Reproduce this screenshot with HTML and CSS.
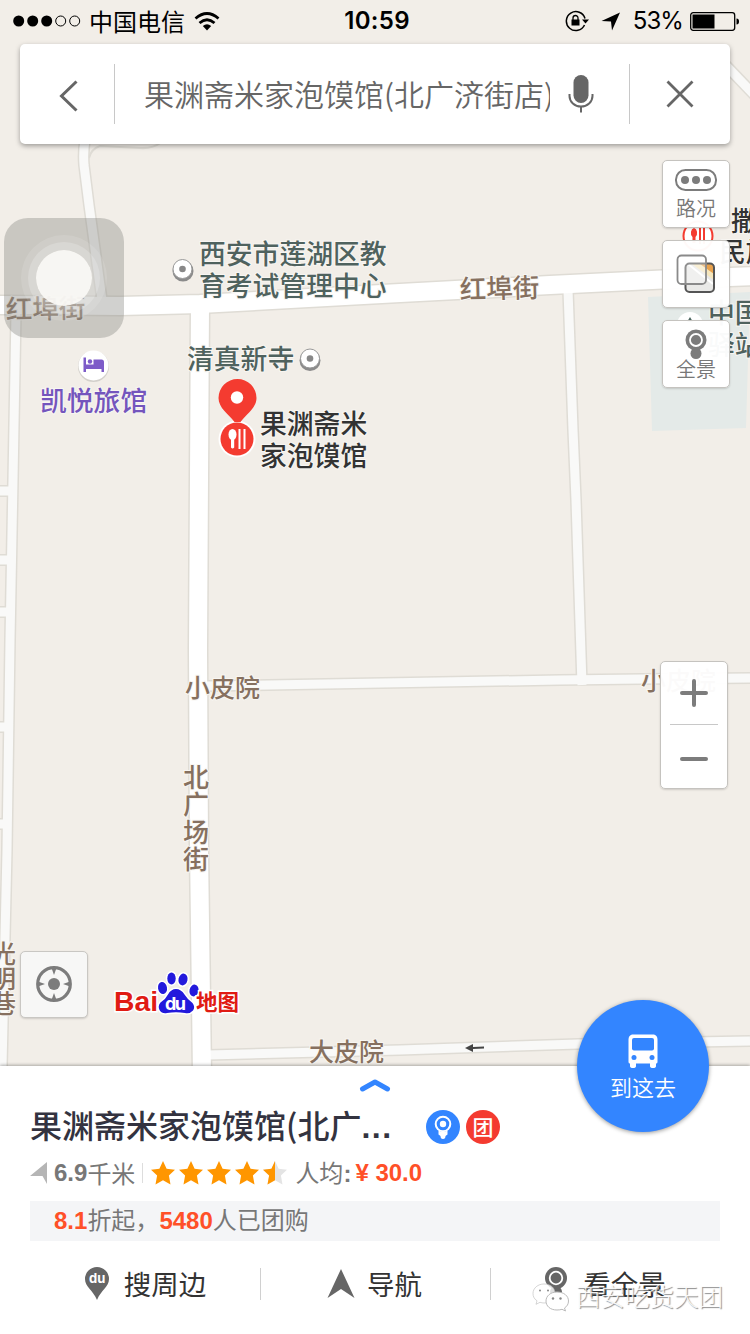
FILE: index.html
```html
<!DOCTYPE html>
<html lang="zh-CN">

<head>
    <meta charset="UTF-8">
    <meta name="viewport" content="width=device-width, initial-scale=1.0">
    <title>果渊斋米家泡馍馆</title>
    <link rel="stylesheet" href="styles.css">
</head>

<body>

    <div class="map-area">

        <!-- map canvas -->
        <svg class="map" width="750" height="1066" viewBox="0 0 750 1066">
            <defs>
                <g id="roads-small">
                    <path d="M85 140 Q83 152 84 165 L89 205 L102 300" />
                    <path d="M568 290 L573 430 L576 500 L582 685" />
                    <path d="M206 686 L560 680 L642 679 L750 678" />
                    <path d="M208 1055 L400 1050 L578 1044 L750 1041" />
                    <path d="M16 312 L13 480 L10 640 L7 850 L2 1066" />
                    <path d="M715 54 L765 106" />
                    <path d="M-5 491 H12 M-5 560 H12 M-5 612 H10 M-5 727 H9 M-5 824 H8" />
                </g>
                <g id="roads-main">
                    <path d="M-5 305 L120 306 L200 304 L400 293 L550 285 L662 279.5 L760 276" />
                    <path d="M200 305 L198 650 L199 850 L202 1075" />
                </g>
            </defs>
            <path class="block" d="M648 297 L750 292 L746 428 L652 431 Z" />
            <path class="edge" d="M89 158 Q91 149 100 146 L140 148 Q152 149 162 142" />
            <use href="#roads-small" class="case small" />
            <use href="#roads-main" class="case main" />
            <use href="#roads-small" class="road small" />
            <use href="#roads-main" class="road main" />
            <path d="M465 1048 l8 -4 v3 l11 -.5 v2 l-11 .5 v3 Z" fill="#444" />

            <!-- street names -->
            <g class="street">
                <text x="6" y="319" transform="rotate(-1 7 319)">红埠街</text>
                <text x="460" y="299" transform="rotate(-1.5 461 300)">红埠街</text>
                <g font-size="25">
                    <text x="185" y="697">小皮院</text>
                    <text x="641" y="690">小皮院</text>
                    <text x="309" y="1061">大皮院</text>
                    <text x="-9" y="963">光</text>
                    <text x="-9" y="988">明</text>
                    <text x="-9" y="1013">巷</text>
                </g>
                <g font-size="26">
                    <text x="183" y="787">北</text>
                    <text x="183" y="814">广</text>
                    <text x="183" y="842">场</text>
                    <text x="183" y="869">街</text>
                </g>
            </g>

            <!-- places -->
            <g class="place">
                <text x="199" y="264">西安市莲湖区教</text>
                <text x="199" y="296">育考试管理中心</text>
                <text x="187" y="369">清真新寺</text>
                <text x="708" y="323">中国</text>
                <text x="708" y="355">驿站</text>
            </g>
            <text class="hotel" x="40" y="411">凯悦旅馆</text>
            <g class="food">
                <text x="260" y="434">果渊斋米</text>
                <text x="260" y="466">家泡馍馆</text>
                <text x="731" y="231">撒拉</text>
                <text x="719" y="262">民族</text>
            </g>

            <g>
                <circle cx="183" cy="271" r="10.500" fill="#8b8b8b" />
                <circle cx="182.500" cy="269" r="9.500" fill="#fff" stroke="#999" />
                <circle cx="182.500" cy="269" r="3.300" fill="#888" />
                <circle cx="310" cy="360.500" r="10.500" fill="#8b8b8b" />
                <circle cx="310" cy="358.500" r="9.500" fill="#fff" stroke="#999" />
                <circle cx="310" cy="358.500" r="3.300" fill="#888" />
            </g>

            <circle cx="93.500" cy="366.500" r="15.500" fill="#d3d0cb" />
            <circle cx="93.500" cy="365.500" r="15" fill="#fff" />
            <path d="M83.500 357.500 h2.500 v7 h7.500 v-5 h8 q2.500 0 2.500 2.500 v10 h-2.500 v-3 h-15.500 v3 h-2.500 Z" fill="#7d5bc8" />
            <circle cx="90" cy="361.500" r="2.200" fill="#7d5bc8" />

            <circle cx="237" cy="439" r="18.500" fill="#fff" />
            <circle cx="237" cy="439" r="16.500" fill="#f43b30" />
            <path d="M218.500 398 a19 19 0 0 1 38 0 c0 10 -10 16 -16 24 h-6 c-6 -8 -16 -14 -16 -24 Z" fill="#f43b30" />
            <circle cx="237" cy="397.500" r="6.200" fill="#fff" />
            <g fill="#fff">
                <ellipse cx="232.500" cy="434.500" rx="4" ry="5.500" />
                <path d="M231 438 h3.200 v9.500 q-1.600 2 -3.200 0 Z M238.500 429 h2 v20 h-2 Z M243.500 429 h2 v20 h-2 Z" />
            </g>

            <circle cx="698" cy="236" r="14.500" fill="#fff" stroke="#f43b30" stroke-width="2" />
            <path d="M694 228 a3.800 5 0 0 1 1.500 9 v6 h-3 v-6 a3.800 5 0 0 1 1.500 -9 Z M699 228 h2 v16 h-2 Z M703 228 h2 v16 h-2 Z" fill="#f43b30" />
            <circle cx="690" cy="325" r="13" fill="#fff" />
            <path d="M690 317 l3 5 h-6 Z" fill="#4d6660" />
        </svg>

        <div class="status-bar">
            <div class="status-left">
                <svg width="68" height="12" viewBox="0 0 68 12">
                    <circle cx="5.700" cy="6" r="5.500" />
                    <circle cx="19.700" cy="6" r="5.500" />
                    <circle cx="33.700" cy="6" r="5.500" />
                    <circle cx="47.700" cy="6" r="5" fill="none" stroke="#000" />
                    <circle cx="61.700" cy="6" r="5" fill="none" stroke="#000" />
                </svg>
                <span class="carrier">中国电信</span>
                <svg width="26" height="19" viewBox="0 0 26 19">
                    <path d="M1.500 6.500 Q13 -3.500 24.500 6.500 M5.500 11 Q13 4.500 20.500 11" fill="none" stroke="#000" stroke-width="2.800" />
                    <path d="M8.800 14 Q13 10.500 17.200 14 L13 18.500 Z" />
                </svg>
            </div>
            <span class="time">10:59</span>
            <div class="status-right">
                <svg width="24" height="22" viewBox="0 0 24 22">
                    <path d="M19.500 15 A9.500 9.500 0 1 1 20 8.500" fill="none" stroke="#000" stroke-width="1.500" />
                    <path d="M17 9.500 h7 l-3.500 4 Z" />
                    <rect x="6.500" y="9.500" width="8" height="6" />
                    <path d="M8 10 v-2 a2.500 2.500 0 0 1 5 0 v2" fill="none" stroke="#000" stroke-width="1.300" />
                </svg>
                <svg class="gps" width="20" height="19" viewBox="0 0 20 19">
                    <path d="M19 .5 L11 18.500 L10 9.500 L.5 9 Z" />
                </svg>
                <span class="percent">53%</span>
                <svg width="49" height="19" viewBox="0 0 49 19">
                    <rect x=".7" y=".7" width="44" height="17.600" rx="2.500" fill="none" stroke="#000" stroke-width="1.300" />
                    <rect x="2.500" y="2.500" width="22" height="14" />
                    <path d="M46.500 6.500 q2.500 0 2.500 3 t-2.500 3 Z" />
                </svg>
            </div>
        </div>

        <div class="search">
            <div class="search-back">
                <svg width="20" height="32" viewBox="0 0 20 32">
                    <path d="M17.500 1.500 L2.500 16 L17.500 30.500" fill="none" stroke="#666" stroke-width="3" />
                </svg>
            </div>
            <div class="search-text">果渊斋米家泡馍馆(北广济街店)</div>
            <svg class="mic" width="26" height="40" viewBox="0 0 26 40">
                <rect x="5.500" y="1" width="15" height="28" rx="7.500" fill="#666" />
                <path d="M1.500 20 v2 a11.500 10.500 0 0 0 23 0 v-2 M13 32 v6.500" fill="none" stroke="#666" stroke-width="2" />
            </svg>
            <div class="search-close">
                <svg width="28" height="28" viewBox="0 0 28 28">
                    <path d="M1.500 1.500 L26.500 26.500 M26.500 1.500 L1.500 26.500" fill="none" stroke="#666" stroke-width="2.800" />
                </svg>
            </div>
        </div>

        <div class="tools">
            <div class="tool">
                <svg width="42" height="22" viewBox="0 0 42 22">
                    <rect x="1" y="1" width="40" height="20" rx="9.500" fill="none" stroke="#7c7c7c" stroke-width="2" />
                    <g fill="#7c7c7c">
                        <circle cx="10" cy="11" r="4" />
                        <circle cx="21" cy="11" r="4" />
                        <circle cx="32" cy="11" r="4" />
                    </g>
                </svg>
                <span>路况</span>
            </div>
            <div class="tool">
                <svg class="layers" width="40" height="40" viewBox="0 0 40 40">
                    <rect x="10" y="10" width="27.500" height="27.500" rx="3" fill="#e9e9e7" />
                    <path d="M16 10 H35 q3 0 3 3 V26 Z" fill="#f6e7bd" />
                    <path d="M24 10 H35 q3 0 3 3 V20 Z" fill="#e9a24d" />
                    <path d="M12 10 L37 30" stroke="#fff" stroke-width="2" />
                    <rect x="9.500" y="9.500" width="28.500" height="28.500" rx="4" fill="none" stroke="#555" stroke-width="2" />
                    <rect x="1.500" y="1.500" width="28.500" height="28.500" rx="4" fill="#fff" fill-opacity=".35" stroke="#8a8a8a" stroke-width="1.800" />
                </svg>
            </div>
            <div class="tool">
                <svg width="22" height="31" viewBox="0 0 22 31">
                    <circle cx="11" cy="24.500" r="5.500" fill="#7c7c7c" />
                    <circle cx="11" cy="11" r="10.500" fill="#7c7c7c" />
                    <circle cx="11" cy="11" r="6" fill="#7c7c7c" stroke="#fff" stroke-width="1.800" />
                </svg>
                <span>全景</span>
            </div>
        </div>

        <div class="zoom">
            <div class="zoom-btn">
                <svg width="28" height="28" viewBox="0 0 28 28">
                    <path d="M2 14 H26 M14 2 V26" stroke="#7c7c7c" stroke-width="4" stroke-linecap="round" />
                </svg>
            </div>
            <div class="zoom-btn">
                <svg width="28" height="28" viewBox="0 0 28 28">
                    <path d="M2 14 H26" stroke="#7c7c7c" stroke-width="4" stroke-linecap="round" />
                </svg>
            </div>
        </div>

        <div class="map-bottom">
            <div class="locate">
                <svg width="36" height="36" viewBox="0 0 36 36">
                    <circle cx="18" cy="18" r="16.300" fill="none" stroke="#7c7c7c" stroke-width="3.200" />
                    <circle cx="18" cy="18" r="6" fill="#7c7c7c" />
                    <path d="M15.500 2 h5 l-2.500 7 Z M15.500 34 h5 l-2.500 -7 Z M2 15.500 v5 l7 -2.500 Z M34 15.500 v5 l-7 -2.500 Z" fill="#7c7c7c" />
                </svg>
            </div>
            <svg class="logo" width="130" height="46" viewBox="0 0 130 46">
                <text class="logo-bai" x="1" y="40" textLength="44" lengthAdjust="spacingAndGlyphs">Bai</text>
                <g fill="#2319dc" stroke="#fff" stroke-width="3" paint-order="stroke">
                    <path d="M63 18 q5 0 8.500 5.500 t8 8.500 q3 4 .5 7.500 q-3 3.500 -8 2.500 q-9 -1.500 -18 0 q-5 1 -7.500 -3 q-2 -4 1 -7.500 q5 -3 7.500 -8 q3 -5.500 8 -5.500 Z" />
                    <ellipse cx="49.500" cy="17" rx="4.500" ry="6" transform="rotate(-10 49.500 17)" />
                    <ellipse cx="58.500" cy="7.500" rx="4.200" ry="6" />
                    <ellipse cx="70" cy="8.500" rx="4.500" ry="6" transform="rotate(12 70 8.500)" />
                    <ellipse cx="81" cy="19.500" rx="4.500" ry="6" transform="rotate(12 81 19.500)" />
                </g>
                <text class="logo-du" x="52" y="38.500" textLength="21">du</text>
                <text class="logo-map" x="83" y="39">地图</text>
            </svg>
        </div>

        <div class="assistive">
            <div class="ring"></div>
        </div>
    </div>

    <div class="panel">
        <svg class="panel-arrow" width="32" height="16" viewBox="0 0 32 16">
            <path d="M3.500 12 L16 5 L28.500 12" fill="none" stroke="#3385ff" stroke-width="5" stroke-linecap="round" stroke-linejoin="round" />
        </svg>

        <div class="title-row">
            <h1>果渊斋米家泡馍馆(北广<span class="dots">...</span></h1>
            <svg width="34" height="34" viewBox="0 0 34 34">
                <circle cx="17" cy="17" r="17" fill="#3385ff" />
                <circle cx="17" cy="14" r="7.300" fill="none" stroke="#fff" stroke-width="2" />
                <circle cx="17" cy="14" r="3.200" fill="#fff" />
                <path d="M12.500 20.500 q4.500 2.500 9 0 v4 l-2 1.500 q0 3 -2.500 3 t-2.500 -3 l-2 -1.500 Z" fill="#fff" />
            </svg>
            <span class="tuan">团</span>
        </div>

        <div class="info-row">
            <svg width="18" height="22" viewBox="0 0 18 22">
                <path d="M0 14 L17 0 V22 L12.500 14 Z" fill="#b5b5b5" />
            </svg>
            <span class="distance"><b>6.9</b>千米</span>
            <svg class="stars" width="140" height="26" viewBox="0 0 140 26">
                <defs>
                    <path id="star" d="M12 0 L15.600 7.800 L24 8.800 L17.900 14.500 L19.500 23.500 L12 19.300 L4.500 23.500 L6.100 14.500 L0 8.800 L8.400 7.800 Z" />
                </defs>
                <g fill="#ff9600">
                    <use href="#star" x="1" y="1" />
                    <use href="#star" x="29" y="1" />
                    <use href="#star" x="57" y="1" />
                    <use href="#star" x="85" y="1" />
                </g>
                <use href="#star" x="113" y="1" fill="#e4e4e4" />
                <path d="M125 1 V20.300 L117.500 24.500 L119.100 15.500 L113 9.800 L121.400 8.800 Z" fill="#ff9600" />
            </svg>
            <span class="avg">人均<b>:</b></span>
            <b class="price">¥ 30.0</b>
        </div>

        <div class="deal"><b>8.1</b>折起，<b>5480</b>人已团购</div>

        <div class="tabs">
            <div class="tab">
                <svg width="24" height="35" viewBox="0 0 24 35">
                    <path d="M12 0 a12 12 0 0 1 12 12 c0 8 -8 11 -12 21 c-4 -10 -12 -13 -12 -21 a12 12 0 0 1 12 -12 Z" fill="#666" />
                    <text class="pin-du" x="4" y="16">du</text>
                </svg>
                <span>搜周边</span>
            </div>
            <div class="tab">
                <svg width="28" height="30" viewBox="0 0 28 30">
                    <path d="M14 0 L27.500 29 L14 20 L.5 29 Z" fill="#666" />
                </svg>
                <span>导航</span>
            </div>
            <div class="tab">
                <svg class="pano" width="24" height="33" viewBox="0 0 24 33">
                    <circle cx="12" cy="26" r="6" fill="#666" />
                    <circle cx="12" cy="12" r="11" fill="#666" />
                    <circle cx="12" cy="12" r="6.300" fill="#666" stroke="#fff" stroke-width="1.800" />
                </svg>
                <span>看全景</span>
            </div>
        </div>

        <div class="go">
            <svg width="30" height="34" viewBox="0 0 30 34">
                <path d="M4 .5 H26 q3.500 1 3.500 5 V28 q0 1.500 -1.500 1.500 V32 q0 2 -3 2 t-3 -2 V29.500 H8 V32 q0 2 -3 2 t-3 -2 V29.500 Q.5 29.500 .5 28 V5.500 Q.5 1.500 4 .5 Z" fill="#fff" />
                <rect x="4" y="4" width="22" height="12.500" rx="2" fill="#3385ff" />
                <circle cx="6" cy="23.500" r="2.500" fill="#3385ff" />
                <circle cx="24" cy="23.500" r="2.500" fill="#3385ff" />
            </svg>
            <span>到这去</span>
        </div>

        <div class="watermark">
            <svg width="38" height="30" viewBox="0 0 38 30">
                <g fill="#fff" stroke="#bbb" stroke-width="1">
                    <path d="M12 1 c7 0 11 4 11 9.500 s-5 9.500 -11 9.500 q-2 0 -4 -.7 l-4 2 1 -3.500 c-3 -2 -4 -4.500 -4 -7.300 c0 -5.500 5 -9.500 11 -9.500 Z" fill-opacity=".8" stroke-opacity=".6" />
                    <path d="M25 9 c7 0 11.500 4 11.500 9 c0 3 -1.500 5.500 -4 7 l1 3 -3.500 -1.700 q-2 .7 -5 .7 c-7 0 -11 -4 -11 -9 s4.500 -9 11 -9 Z" />
                </g>
                <g fill="#888">
                    <circle cx="8" cy="7.500" r="1" />
                    <circle cx="16" cy="7.500" r="1" />
                    <circle cx="21" cy="15.500" r="1.200" />
                    <circle cx="28.500" cy="15.500" r="1.200" />
                </g>
            </svg>
            <span>西安吃货天团</span>
        </div>
    </div>

</body>

</html>
```

FILE: styles.css
```css
* {
    margin: 0;
    padding: 0;
    box-sizing: border-box;
}

body {
    width: 750px;
    height: 1334px;
    overflow: hidden;
    background-color: #fff;
    font-family: "Noto Sans CJK SC", sans-serif;
}

svg {
    display: block;
    flex-shrink: 0;
}

/* Map */
.map-area {
    position: relative;
    display: flex;
    flex-direction: column;
    height: 1066px;
    background-color: #f2eee8;
}

.map {
    position: absolute;
    top: 0;
    left: 0;
}

.map text {
    font-weight: 500;
    stroke: #f8f6f2;
    stroke-width: 2px;
    paint-order: stroke;
}

.block {
    fill: #e4eae8;
}

.case,
.road,
.edge {
    fill: none;
}

.case,
.edge {
    stroke: #dfdcd5;
}

.edge {
    stroke-width: 2px;
}

.road {
    stroke: #fdfdfd;
}

.case.small {
    stroke-width: 12px;
}

.case.main {
    stroke-width: 21px;
}

.road.small {
    stroke: #f9f9f8;
    stroke-width: 9px;
}

.road.main {
    stroke: #fff;
    stroke-width: 18px;
}

.street {
    fill: #86705f;
    font-size: 26.5px;
}

.place {
    fill: #4f625e;
    font-size: 26.8px;
}

.hotel {
    fill: #7455bd;
    font-size: 26.8px;
}

.food {
    fill: #333;
    font-size: 26.8px;
}

/* Status bar */
.status-bar {
    position: relative;
    display: grid;
    grid-template-columns: 1fr auto 1fr;
    align-items: center;
    height: 40px;
    padding: 0 11px 0 13px;
    color: #000;
}

.status-left,
.status-right {
    display: flex;
    align-items: center;
}

.status-right {
    justify-content: flex-end;
}

.carrier {
    margin: 0 9px 0 8px;
    font-size: 24px;
    line-height: 40px;
}

.time {
    margin-left: 2px;
    font: 600 24px/42px Inter, sans-serif;
    letter-spacing: 0.3px;
}

.gps {
    margin: 0 12px;
}

.percent {
    margin-right: 7px;
    font: 400 24px/42px Inter, sans-serif;
    letter-spacing: -0.9px;
}

/* Search box */
.search {
    position: relative;
    display: flex;
    align-items: center;
    height: 100px;
    margin: 4px 20px 0;
    background-color: #fff;
    border-radius: 5px;
    box-shadow: 0 2px 5px rgba(0, 0, 0, 0.35);
}

.search-back,
.search-close {
    display: flex;
    align-items: center;
    justify-content: center;
    height: 60px;
}

.search-back {
    width: 95px;
    padding: 4px 0 0 3px;
    border-right: 1px solid #c8c8c8;
}

.search-text {
    width: 406px;
    margin: 0 18px 0 29px;
    padding-bottom: 3px;
    overflow: hidden;
    white-space: nowrap;
    color: #666;
    font-size: 30px;
    font-weight: 350;
}

.search-close {
    width: 101px;
    margin-left: 35px;
    border-left: 1px solid #c8c8c8;
}

/* Map buttons */
.tools {
    position: relative;
    display: flex;
    flex-direction: column;
    gap: 12px;
    align-self: flex-end;
    margin: 16px 20px 0 0;
}

.tool {
    display: flex;
    flex-direction: column;
    align-items: center;
    width: 68px;
    height: 68px;
    padding-top: 8px;
    background-color: rgba(255, 255, 255, 0.97);
    border: 1px solid #c5c3bf;
    border-radius: 5px;
    box-shadow: 0 1px 2px rgba(0, 0, 0, 0.15);
    color: #777;
    font-size: 20px;
    font-weight: 350;
    line-height: 20px;
}

.tool span {
    margin-top: 7px;
}

.tool:last-child span {
    margin-top: -1px;
}

.layers {
    margin-top: 5px;
}

.zoom {
    position: relative;
    align-self: flex-end;
    width: 68px;
    height: 128px;
    margin: 273px 22px 0 0;
    padding: 0 9px;
    background-color: rgba(255, 255, 255, 0.97);
    border: 1px solid #c5c3bf;
    border-radius: 5px;
    box-shadow: 0 1px 2px rgba(0, 0, 0, 0.15);
}

.zoom-btn {
    display: flex;
    align-items: center;
    justify-content: center;
    height: 62px;
}

.zoom-btn + .zoom-btn {
    height: 69px;
    border-top: 1px solid #c8c8c8;
}

.map-bottom {
    position: relative;
    display: flex;
    align-items: flex-start;
    gap: 25px;
    margin: 162px 0 0 20px;
}

.locate {
    display: flex;
    align-items: center;
    justify-content: center;
    width: 68px;
    height: 67px;
    padding-bottom: 2px;
    background-color: #f7f7f6;
    border: 1px solid #c9c7c3;
    border-radius: 5px;
    box-shadow: 0 1px 2px rgba(0, 0, 0, 0.15);
}

.logo {
    margin-top: 20px;
    overflow: visible;
}

.logo-bai,
.logo-map {
    fill: #e01b13;
    stroke: #fff;
    stroke-width: 3px;
    paint-order: stroke;
}

.logo-bai {
    font: 700 27px "Liberation Sans", sans-serif;
}

.logo-map {
    font-size: 21.5px;
    font-weight: 700;
}

.logo-du {
    fill: #fff;
    font: 700 18px Inter, sans-serif;
}

.assistive {
    position: absolute;
    top: 218px;
    left: 4px;
    display: flex;
    align-items: center;
    justify-content: center;
    width: 120px;
    height: 120px;
    border-radius: 24px;
    background-color: rgba(140, 140, 135, 0.4);
}

.ring {
    width: 56px;
    height: 56px;
    border-radius: 50%;
    background-color: rgba(250, 249, 245, 0.95);
    box-shadow: 0 0 0 8px rgba(255, 255, 255, 0.2), 0 0 0 15px rgba(255, 255, 255, 0.12);
}

/* Bottom panel */
.panel {
    position: relative;
    height: 268px;
    padding: 0 30px;
    box-shadow: 0 -1px 3px rgba(0, 0, 0, 0.3);
    background-color: #fff;
    color: #777;
    font-size: 24px;
}

.panel b {
    font-family: "Liberation Sans", sans-serif;
}

.panel-arrow {
    margin: 0 auto;
    padding-top: 11px;
    height: 27px;
}

.title-row {
    display: flex;
    align-items: center;
    gap: 6px;
    height: 34px;
    margin-top: 17px;
}

.title-row h1 {
    width: 390px;
    padding-bottom: 4px;
    color: #333340;
    font-size: 32px;
    font-weight: 500;
    line-height: 34px;
    white-space: nowrap;
}

.dots {
    font-family: "Liberation Sans", sans-serif;
    font-weight: 700;
    letter-spacing: 1.5px;
}

.tuan {
    width: 34px;
    height: 34px;
    border-radius: 50%;
    background-color: #f43b30;
    color: #fff;
    font-size: 21px;
    font-weight: 500;
    line-height: 32px;
    text-align: center;
}

.info-row {
    display: flex;
    align-items: center;
    height: 36px;
    margin-top: 11px;
    line-height: 36px;
}

.distance {
    display: flex;
    align-items: center;
    margin-left: 6px;
    height: 20px;
    padding-right: 7px;
    border-right: 1px solid #ddd;
}

.stars {
    margin: 0 5px 0 7px;
}

.avg {
    padding-bottom: 1px;
}

.price {
    margin-left: 4px;
    color: #ff5028;
}

.deal {
    height: 40px;
    margin-top: 10px;
    padding-left: 24px;
    background-color: #f4f5f7;
    line-height: 36px;
}

.deal b {
    color: #ff5028;
}

.tabs {
    display: flex;
    align-items: center;
    height: 32px;
    margin: 27px -30px 0;
    color: #333;
    font-size: 27.5px;
    font-weight: 400;
    line-height: 32px;
}

.tab {
    display: flex;
    align-items: center;
    justify-content: center;
    gap: 15px;
    width: 230px;
    height: 32px;
    border-left: 1px solid #d0d0d0;
}

.tab span {
    padding-bottom: 3px;
}

.tab:first-child {
    width: 260px;
    padding-left: 31px;
    border-left: none;
}

.tab:nth-child(2) {
    gap: 12px;
    padding-right: 2px;
}

.tab:last-child {
    width: 260px;
    padding-right: 31px;
}

.pano {
    margin-top: -3px;
}

.pin-du {
    fill: #fff;
    font: 700 13px Inter, sans-serif;
}

.go {
    position: absolute;
    top: -66px;
    left: 577px;
    display: flex;
    flex-direction: column;
    align-items: center;
    width: 132px;
    height: 132px;
    padding-top: 34px;
    border-radius: 50%;
    background-color: #3385ff;
    box-shadow: 0 1px 4px rgba(0, 0, 0, 0.4);
    color: #fff;
    font-size: 22px;
    font-weight: 350;
    line-height: 24px;
}

.go span {
    margin-top: 6px;
}

.watermark {
    position: absolute;
    top: 216px;
    left: 532px;
    display: flex;
    align-items: center;
    gap: 6px;
    color: rgba(255, 255, 255, 0.9);
    font-size: 24.5px;
    font-weight: 300;
    line-height: 28px;
    text-shadow: 1px 1px 1px #888;
}

.watermark span {
    padding-bottom: 4px;
}
```
